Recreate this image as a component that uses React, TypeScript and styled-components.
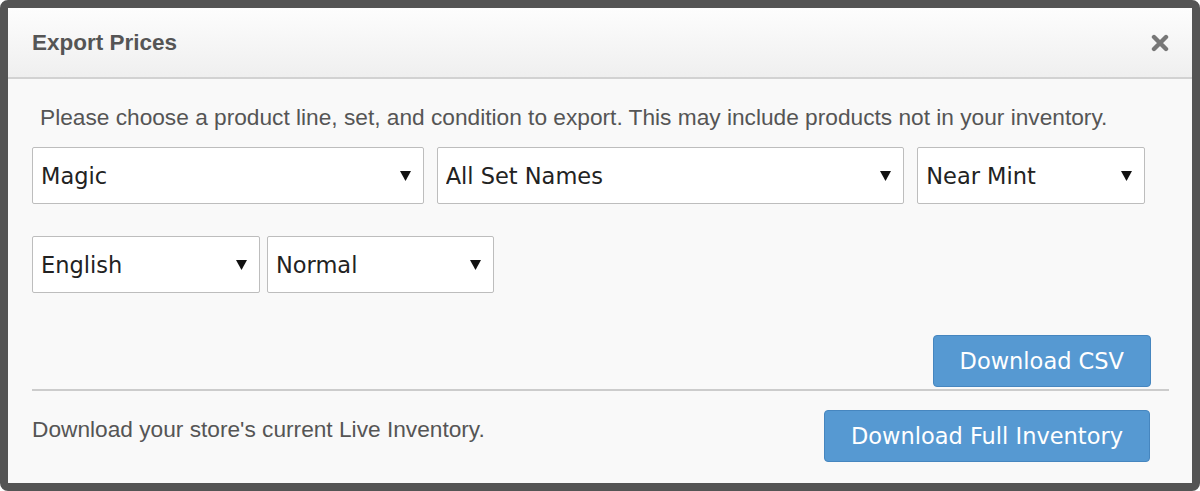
import styled, { createGlobalStyle } from 'styled-components';

const GlobalStyle = createGlobalStyle`
  html, body {
    margin: 0;
    padding: 0;
    background: #ffffff;
  }
  * {
    box-sizing: border-box;
  }
`;

const Modal = styled.div`
  width: 1200px;
  height: 491px;
  display: flex;
  flex-direction: column;
  border: 8px solid #545454;
  border-radius: 8px;
  background: #f9f9f9;
  overflow: hidden;
`;

const Header = styled.header`
  height: 71px;
  flex-shrink: 0;
  display: flex;
  align-items: center;
  justify-content: space-between;
  padding: 0 23px 0 24px;
  background: linear-gradient(#fdfdfd, #efefef);
  border-bottom: 2px solid #d2d2d2;
`;

const Title = styled.h3`
  margin: 0;
  font-family: 'Liberation Sans', Arial, sans-serif;
  font-size: 22.5px;
  font-weight: 700;
  color: #555555;
`;

const CloseButton = styled.button`
  width: 18px;
  height: 18px;
  padding: 0;
  border: 0;
  background: none;
  display: flex;
  cursor: pointer;
`;

const Body = styled.div`
  padding: 25px 47px 0 24px;
`;

const Description = styled.p`
  margin: 0 0 17px 8px;
  font-family: 'Liberation Sans', Arial, sans-serif;
  font-size: 22.7px;
  line-height: 26px;
  color: #555555;
  white-space: nowrap;
`;

const SelectRow = styled.div<{ $gap: number }>`
  display: flex;
  gap: ${(p) => p.$gap}px;
  margin-bottom: 32px;
`;

const SelectWrap = styled.div<{ $width: number }>`
  position: relative;
  width: ${(p) => p.$width}px;
  height: 57px;
`;

const Select = styled.select`
  width: 100%;
  height: 100%;
  appearance: none;
  -webkit-appearance: none;
  background: #ffffff;
  border: 1px solid #bdbdbd;
  border-radius: 2px;
  padding: 0 36px 0 8px;
  font-family: 'DejaVu Sans', Verdana, sans-serif;
  font-size: 22.5px;
  color: #222222;
  outline: none;
`;

const Arrow = styled.svg`
  position: absolute;
  right: 13px;
  top: 50%;
  margin-top: -5px;
  pointer-events: none;
`;

const ActionRow = styled.div`
  display: flex;
  justify-content: flex-end;
  margin-top: 42px;
`;

const PrimaryButton = styled.button`
  height: 52px;
  padding: 0 26px;
  background: #5699d2;
  border: 1px solid #4686bf;
  border-radius: 4px;
  color: #ffffff;
  font-family: 'DejaVu Sans', Verdana, sans-serif;
  font-size: 22.5px;
  cursor: pointer;
`;

const CsvButton = styled(PrimaryButton)`
  margin-right: -6px;
`;

const Divider = styled.hr`
  margin: 2px 23px 0 24px;
  border: 0;
  border-top: 2px solid #cccccc;
`;

const Footer = styled.div`
  display: flex;
  align-items: center;
  justify-content: space-between;
  padding: 19px 42px 0 24px;
`;

const FooterText = styled.span`
  font-family: 'Liberation Sans', Arial, sans-serif;
  font-size: 22.7px;
  color: #555555;
  margin-top: -14px;
`;

type DropdownProps = { width: number; value: string };

const Dropdown = ({ width, value }: DropdownProps) => (
  <SelectWrap $width={width}>
    <Select defaultValue={value}>
      <option>{value}</option>
    </Select>
    <Arrow width="11" height="10" viewBox="0 0 11 10">
      <path d="M0 0 H11 L5.5 10 Z" fill="#111" />
    </Arrow>
  </SelectWrap>
);

const App = () => {
  return (
    <>
      <GlobalStyle />
      <Modal>
        <Header>
          <Title>Export Prices</Title>
          <CloseButton aria-label="Close">
            <svg width="18" height="18" viewBox="0 0 18 18">
              <path d="M3 3 L15 15 M15 3 L3 15" stroke="#777" strokeWidth="4.4" strokeLinecap="round" />
            </svg>
          </CloseButton>
        </Header>
        <Body>
          <Description>
            Please choose a product line, set, and condition to export. This may include products not in your inventory.
          </Description>
          <SelectRow $gap={13}>
            <Dropdown width={392} value="Magic" />
            <Dropdown width={468} value="All Set Names" />
            <Dropdown width={228} value="Near Mint" />
          </SelectRow>
          <SelectRow $gap={7}>
            <Dropdown width={228} value="English" />
            <Dropdown width={227} value="Normal" />
          </SelectRow>
          <ActionRow>
            <CsvButton>Download CSV</CsvButton>
          </ActionRow>
        </Body>
        <Divider />
        <Footer>
          <FooterText>Download your store's current Live Inventory.</FooterText>
          <PrimaryButton>Download Full Inventory</PrimaryButton>
        </Footer>
      </Modal>
    </>
  );
};

export default App;
